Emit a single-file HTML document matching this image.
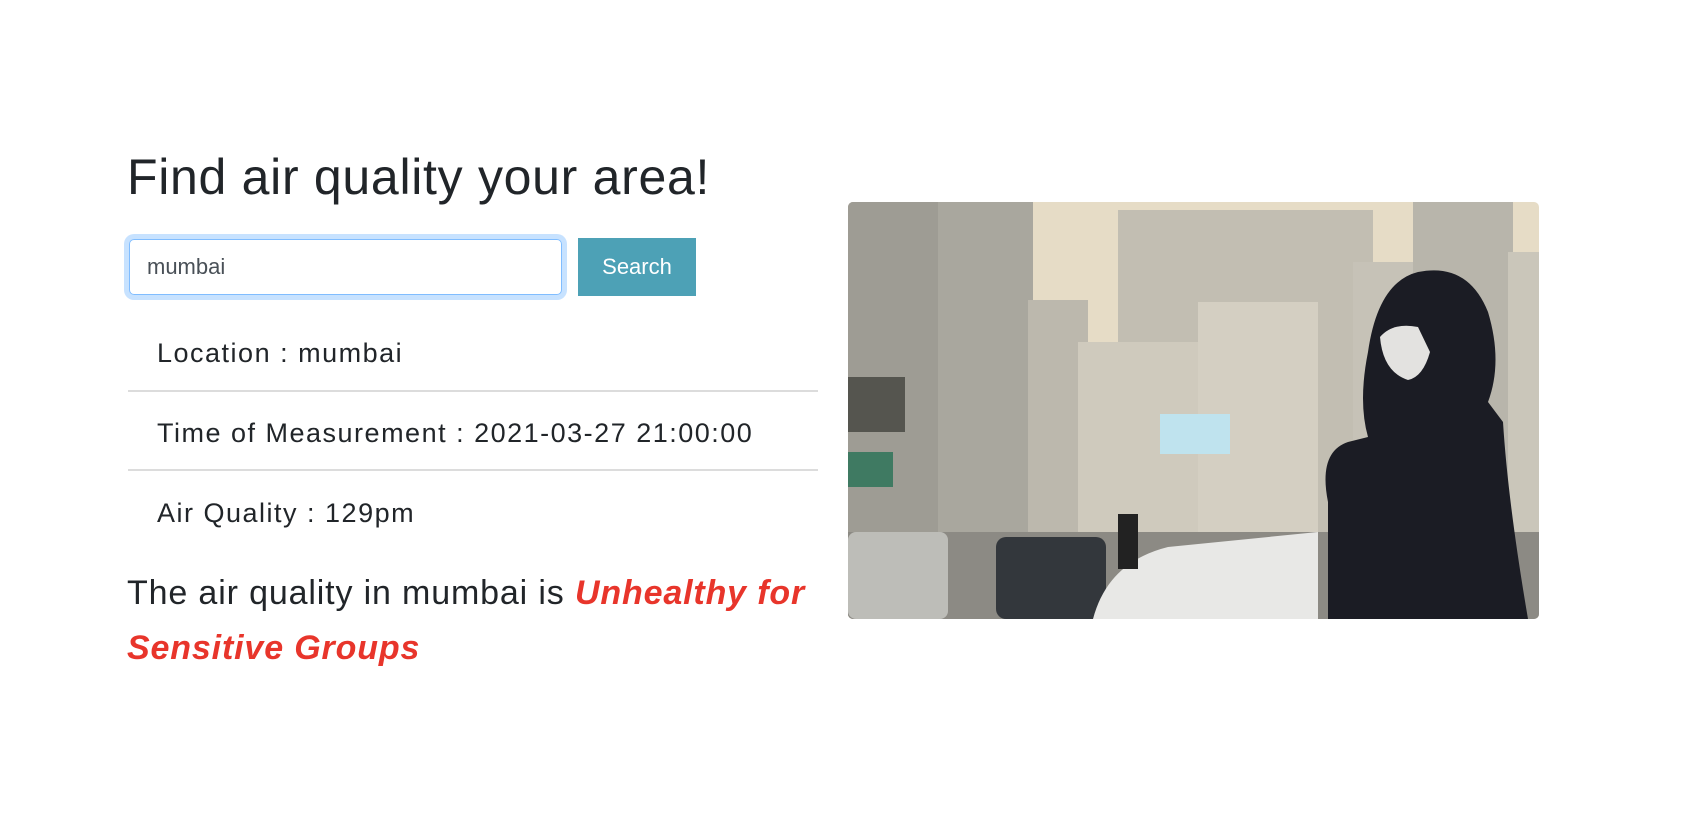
<!DOCTYPE html>
<html><head><meta charset="utf-8"><style>
body{margin:0;background:#fff;width:1682px;height:830px;overflow:hidden;font-family:"Liberation Sans",sans-serif;color:#212529;position:relative}
h1{position:absolute;left:127px;top:147px;margin:0;font-weight:400;font-size:50px;line-height:60px;letter-spacing:0.7px}
.inp{position:absolute;left:129px;top:239px;width:414px;height:54px;border:1px solid #80bdff;border-radius:5px;box-shadow:0 0 0 5px rgba(0,123,255,.22);font-size:22px;color:#495057;line-height:54px;padding-left:17px;box-sizing:content-box}
.btn{position:absolute;left:578px;top:238px;width:118px;height:58px;background:#4da1b6;color:#fff;font-size:22px;line-height:58px;text-align:center}
.li{position:absolute;left:157px;font-size:27px;letter-spacing:1.5px}
.hr{position:absolute;left:128px;width:690px;height:2px;background:#dcdcdc}
.p{position:absolute;left:127px;top:566px;width:740px;font-size:34px;line-height:55px;letter-spacing:0.85px}
.p b{color:#e8352b;font-style:italic}
.img{position:absolute;left:848px;top:202px;width:691px;height:417px;border-radius:5px;overflow:hidden}
</style></head><body>
<h1>Find air quality your area!</h1>
<div class="inp">mumbai</div>
<div class="btn">Search</div>
<div class="li" style="top:338px">Location : mumbai</div>
<div class="hr" style="top:390px"></div>
<div class="li" style="top:418px">Time of Measurement : 2021-03-27 21:00:00</div>
<div class="hr" style="top:469px"></div>
<div class="li" style="top:498px">Air Quality : 129pm</div>
<div class="p">The air quality in mumbai is <b>Unhealthy for Sensitive Groups</b></div>
<div class="img"><svg width="691" height="417" viewBox="0 0 691 417">
<rect width="691" height="417" fill="#e6dcc6"/>
<rect x="0" y="0" width="185" height="417" fill="#a9a79e"/>
<rect x="0" y="0" width="90" height="417" fill="#9e9c94"/>
<rect x="270" y="8" width="255" height="409" fill="#c2beb2"/>
<rect x="180" y="98" width="60" height="319" fill="#bcb8ad"/>
<rect x="230" y="140" width="230" height="277" fill="#cfcabd"/>
<rect x="350" y="100" width="120" height="317" fill="#d4cfc2"/>
<rect x="505" y="60" width="60" height="357" fill="#c6c2b7"/>
<rect x="565" y="0" width="100" height="417" fill="#b8b5ab"/>
<rect x="660" y="50" width="31" height="367" fill="#cac6ba"/>
<rect x="312" y="212" width="70" height="40" fill="#bfe3ee"/>
<rect x="0" y="175" width="57" height="55" fill="#55554f"/>
<rect x="0" y="250" width="45" height="35" fill="#3f7a62"/>
<rect x="0" y="330" width="691" height="87" fill="#8c8a84"/>
<rect x="0" y="330" width="100" height="87" rx="8" fill="#bdbdb8"/>
<rect x="148" y="335" width="110" height="82" rx="10" fill="#33373c"/>
<path d="M245 417 Q260 360 320 345 L470 330 L470 417Z" fill="#e8e8e6"/>
<rect x="270" y="312" width="20" height="55" fill="#222"/>
<path d="M480 417 L480 300 Q470 250 500 240 L520 235 Q510 200 520 150 Q530 80 570 70 Q620 60 640 110 Q655 160 640 200 L655 220 Q660 300 680 417Z" fill="#1b1c24"/>
<path d="M532 135 Q545 120 570 125 L582 150 Q575 175 560 178 Q535 170 532 135Z" fill="#e3e2e0"/>
</svg></div>
</body></html>
